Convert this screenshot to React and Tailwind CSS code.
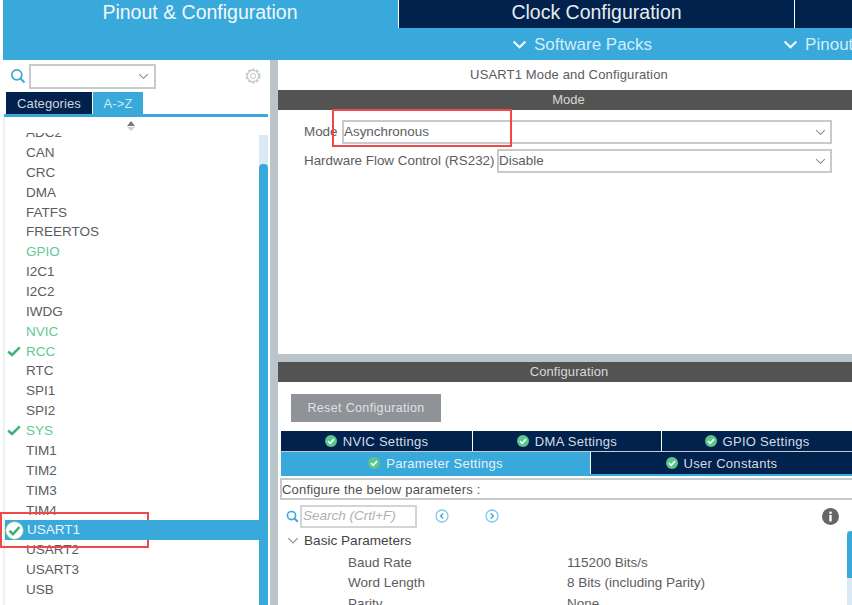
import React from "react";

const F = { fontFamily: '"Liberation Sans", Arial, sans-serif' };

function Chevron({ className = "", w = 14, color = "#8a8f94", sw = 1.4 }) {
  return (
    <svg width={w} height={w * 0.6} viewBox="0 0 14 8" className={`shrink-0 ${className}`} fill="none">
      <path d="M1.5 1.2 L7 6.6 L12.5 1.2" stroke={color} strokeWidth={sw} />
    </svg>
  );
}

function CheckCircle({ size = 12, fill = "#5cc58c" }) {
  return (
    <svg width={size} height={size} viewBox="0 0 12 12" className="shrink-0">
      <circle cx="6" cy="6" r="6" fill={fill} />
      <path d="M3 6.2 L5.2 8.3 L9 4.1" stroke="#fff" strokeWidth="1.6" fill="none" />
    </svg>
  );
}

function Tick() {
  return (
    <svg width="14" height="11" viewBox="0 0 14 11" className="shrink-0">
      <path d="M1.2 5.5 L5 9 L12.8 1.4" stroke="#3fb27a" strokeWidth="2.5" fill="none" />
    </svg>
  );
}

const items = [
  ["ADC2"], ["CAN"], ["CRC"], ["DMA"], ["FATFS"], ["FREERTOS"], ["GPIO", "g"], ["I2C1"], ["I2C2"], ["IWDG"],
  ["NVIC", "g"], ["RCC", "t"], ["RTC"], ["SPI1"], ["SPI2"], ["SYS", "t"], ["TIM1"], ["TIM2"], ["TIM3"], ["TIM4"],
  ["USART1", "s"], ["USART2"], ["USART3"], ["USB"], ["USB_DEVICE", "d"],
];

function ListRow({ name, kind }) {
  if (kind === "s") {
    return (
      <div className="relative z-10 flex items-center h-[19.87px] bg-[#39a8db] text-[#eaf6fb]">
        <span className="w-[22px] flex justify-start">
          <svg width="19" height="19" viewBox="0 0 19 19">
            <circle cx="9.5" cy="9.5" r="9" fill="#fff" stroke="#5cc58c" strokeWidth="1" />
            <path d="M4.5 9.8 L8 13.2 L14.5 6" stroke="#3fb27a" strokeWidth="2.6" fill="none" />
          </svg>
        </span>
        <span>{name}</span>
      </div>
    );
  }
  const color = kind === "g" || kind === "t" ? "text-[#62c994]" : kind === "d" ? "text-[#b5b5b5]" : "text-[#5c5c60]";
  return (
    <div className={`flex items-center h-[19.87px] ${color}`}>
      <span className="w-[21px] pl-[2px] flex items-center">{kind === "t" && <Tick />}</span>
      <span>{name}</span>
    </div>
  );
}

function SelectBox({ value, className = "" }) {
  return (
    <div className={`h-[24px] border-2 border-[#c6cacc] flex items-center justify-between pr-[4px] text-[#5c5c60] ${className}`}>
      <span>{value}</span>
      <Chevron w={11} />
    </div>
  );
}

function SubTab({ label, active, className = "" }) {
  return (
    <div className={`flex items-center justify-center gap-[6px] tracking-[0.3px] ${active ? "bg-[#39a8db] text-[#e4f3fa]" : "bg-[#00224c] text-[#d5dbe2]"} ${className}`}>
      <CheckCircle />
      <span>{label}</span>
    </div>
  );
}

function ParamRow({ label, value }) {
  return (
    <div className="flex items-center h-[20.7px] text-[#5c5c60] text-[13.5px]">
      <span className="w-[289px] pl-[70px]">{label}</span>
      <span>{value}</span>
    </div>
  );
}

export default function App() {
  return (
    <div className="relative w-[852px] h-[605px] overflow-hidden bg-white text-[13px] leading-none" style={F}>
      {/* Header */}
      <div className="pl-[3px] bg-white">
        <div className="flex h-[28px] text-[19.5px]">
          <div className="w-[395px] bg-[#39a8db] text-[#f2f9fc] flex items-center justify-center pr-[1px] pb-[2px]">Pinout &amp; Configuration</div>
          <div className="w-[395px] ml-[1px] bg-[#00224c] text-[#e8ecf0] flex items-center justify-center pb-[2px]">Clock Configuration</div>
          <div className="flex-1 ml-[1px] bg-[#00224c]" />
        </div>
        <div className="h-[32px] bg-[#39a8db] text-[#d4edf8] text-[17px] flex items-center">
          <Chevron w={15} color="#f0f9fd" sw={2} className="ml-[509px]" />
          <span className="ml-[7px] whitespace-nowrap">Software Packs</span>
          <Chevron w={15} color="#f0f9fd" sw={2} className="ml-[131px]" />
          <span className="ml-[7px] whitespace-nowrap">Pinout</span>
        </div>
      </div>

      <div className="flex h-[545px]">
        {/* Left panel */}
        <div className="w-[270px] pl-[3px] shrink-0 flex flex-col">
          <div className="h-[32px] flex items-center shrink-0">
            <svg width="16" height="16" viewBox="0 0 16 16" className="ml-[7px]" fill="none">
              <circle cx="6.8" cy="6.8" r="5" stroke="#39a8db" strokeWidth="1.7" />
              <path d="M10.5 10.5 L14.5 14.5" stroke="#39a8db" strokeWidth="2" />
            </svg>
            <div className="ml-[3px] w-[127px] h-[25px] border-2 border-[#c6cacc] flex items-center justify-end pr-[5px]">
              <Chevron w={11} />
            </div>
            <svg width="18" height="18" viewBox="0 0 18 18" className="ml-[88px]" fill="none">
              <circle cx="9" cy="9" r="6.3" stroke="#c9cccf" strokeWidth="2.4" strokeDasharray="2.6 1.4" />
              <circle cx="9" cy="9" r="5.6" stroke="#c9cccf" strokeWidth="1" />
              <circle cx="9" cy="9" r="2.6" stroke="#c9cccf" strokeWidth="1" />
            </svg>
          </div>
          <div className="flex pl-[3px] h-[22px] shrink-0 text-[13px] tracking-[0.1px]">
            <div className="w-[86px] bg-[#00224c] text-[#cfd6de] flex items-center justify-center">Categories</div>
            <div className="w-[50px] ml-[1px] bg-[#39a8db] text-[#cdeaf7] flex items-center justify-center">A-&gt;Z</div>
          </div>
          <div className="h-[3px] bg-[#39a8db] ml-[1px] mr-[2px] shrink-0" />
          <div className="flex-1 flex min-h-0 border-l-2 border-[#f0f1f2]">
            <div className="flex-1 min-w-0 flex flex-col">
              <div className="h-[16px] shrink-0 flex flex-col items-center gap-[1px] pt-[4px] pr-[2px] bg-white relative z-10">
                <span className="w-0 h-0 border-x-[4px] border-x-transparent border-b-[5px] border-b-[#777]" />
                <span className="w-0 h-0 border-x-[4px] border-x-transparent border-t-[4px] border-t-[#ccc]" />
              </div>
              <div className="flex-1 min-h-0 -mt-[10px] text-[13.5px]">
                {items.map(([n, k]) => <ListRow key={n} name={n} kind={k} />)}
              </div>
            </div>
            <div className="w-[9px] mr-[2px] mt-[18px] bg-[#dbe9f4] shrink-0">
              <div className="mt-[29px] h-[460px] bg-[#39a8db] rounded-t-[4px]" />
            </div>
          </div>
        </div>

        {/* Splitter */}
        <div className="w-[8px] bg-[#b9c4cb] shrink-0" />

        {/* Right panel */}
        <div className="flex-1 min-w-0 flex flex-col">
          <div className="h-[30px] flex items-center justify-center pl-[8px] pb-[2px] text-[#5c5c60] tracking-[0.15px]">USART1 Mode and Configuration</div>
          <div className="h-[20px] bg-[#535353] text-[#d8d8d8] flex items-center justify-center pl-[7px] pb-[2px]">Mode</div>
          <div className="h-[244px] pl-[26px] pr-[20px] pt-[10px] flex flex-col gap-[5px] text-[#5c5c60] text-[13.4px]">
            <div className="flex items-center">
              <span className="w-[38px]">Mode</span>
              <SelectBox value="Asynchronous" className="flex-1" />
            </div>
            <div className="flex items-center">
              <span className="w-[193px] whitespace-nowrap">Hardware Flow Control (RS232)</span>
              <SelectBox value="Disable" className="flex-1" />
            </div>
          </div>
          <div className="h-[8px] bg-[#b9c4cb] shrink-0" />
          <div className="h-[20px] bg-[#535353] text-[#d8d8d8] flex items-center justify-center shrink-0 pl-[8px] pb-[2px] tracking-[0.1px]">Configuration</div>
          <div className="pl-[13px] pt-[12px] shrink-0">
            <div className="w-[150px] h-[28px] bg-[#8f9397] text-[#dfe1e3] text-[12.5px] flex items-center justify-center tracking-[0.35px]">Reset Configuration</div>
          </div>
          <div className="pl-[3px] pt-[9px] shrink-0">
            <div className="flex h-[21px] gap-[1px] border-b border-[#c6cacc]">
              <SubTab label="NVIC Settings" className="w-[191px]" />
              <SubTab label="DMA Settings" className="w-[188px]" />
              <SubTab label="GPIO Settings" className="flex-1" />
            </div>
            <div className="flex h-[24px] gap-[1px] border-b-2 border-[#39a8db]">
              <SubTab label="Parameter Settings" active className="w-[309px]" />
              <SubTab label="User Constants" className="flex-1" />
            </div>
            <div className="mt-[2px] h-[22px] border-2 border-r-0 border-[#c6cacc] flex items-center text-[#4f4f53] tracking-[0.2px] -ml-[1px]">
              Configure the below parameters :
            </div>
          </div>
          <div className="relative flex-1 min-h-0 pl-[8px]">
            <div className="h-[32px] flex items-center">
              <svg width="13" height="13" viewBox="0 0 16 16" fill="none">
                <circle cx="6.8" cy="6.8" r="5" stroke="#39a8db" strokeWidth="2" />
                <path d="M10.5 10.5 L14.5 14.5" stroke="#39a8db" strokeWidth="2.4" />
              </svg>
              <div className="ml-[1px] w-[117px] h-[23px] border-2 border-[#d2d5d7] text-[#b0b0b0] text-[13.5px] italic flex items-center pl-[1px]">Search (Crtl+F)</div>
              <svg width="14" height="14" viewBox="0 0 14 14" className="ml-[18px]" fill="none">
                <circle cx="7" cy="7" r="6" stroke="#7fcbec" strokeWidth="1.3" />
                <path d="M8.2 4.5 L5.6 7 L8.2 9.5" stroke="#39a8db" strokeWidth="1.4" />
              </svg>
              <svg width="14" height="14" viewBox="0 0 14 14" className="ml-[36px]" fill="none">
                <circle cx="7" cy="7" r="6" stroke="#7fcbec" strokeWidth="1.3" />
                <path d="M5.8 4.5 L8.4 7 L5.8 9.5" stroke="#39a8db" strokeWidth="1.4" />
              </svg>
              <svg width="17" height="17" viewBox="0 0 17 17" className="ml-[323px]">
                <circle cx="8.5" cy="8.5" r="8.5" fill="#636569" />
                <rect x="7.3" y="7" width="2.4" height="6.5" fill="#fff" />
                <rect x="7.3" y="3.6" width="2.4" height="2.2" fill="#fff" />
              </svg>
            </div>
            <div className="flex items-center h-[22px] -mt-[2px] text-[#444448] text-[13.6px]">
              <Chevron w={12} className="ml-[1px]" />
              <span className="ml-[5px]">Basic Parameters</span>
            </div>
            <div className="-ml-[8px]">
              <ParamRow label="Baud Rate" value="115200 Bits/s" />
              <ParamRow label="Word Length" value="8 Bits (including Parity)" />
              <ParamRow label="Parity" value="None" />
            </div>
            <div className="absolute right-0 top-[31px] w-[5px] h-[100px] bg-[#dbe9f4]">
              <div className="h-[47px] bg-[#39a8db] rounded-tl-[4px]" />
            </div>
          </div>
        </div>
      </div>

      {/* Red annotation rectangles */}
      <div className="absolute left-[332px] top-[109px] w-[180px] h-[38px] border-2 border-[#f04848]" />
      <div className="absolute left-0 top-[512px] w-[149px] h-[36px] border-2 border-[#f04848]" />
    </div>
  );
}
